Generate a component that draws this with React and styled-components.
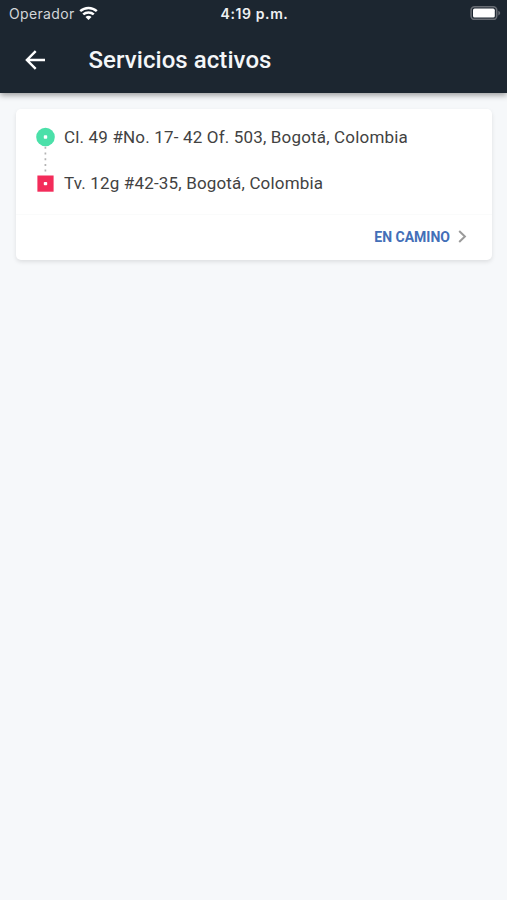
import React from 'react';
import styled, { createGlobalStyle } from 'styled-components';

const GlobalStyle = createGlobalStyle`
  * {
    box-sizing: border-box;
  }
  body {
    margin: 0;
    background: #f6f8fa;
    font-family: Inter, Roboto, "Liberation Sans", sans-serif;
  }
`;

const Screen = styled.div`
  min-height: 100vh;
  background: #f6f8fa;
`;

// Dark block shared by the status bar and the navigation bar
const Header = styled.header`
  height: 93px;
  background: #1c2630;
  color: #fff;
  box-shadow: 0 2px 6px rgba(0, 0, 0, 0.4);
`;

const StatusBar = styled.div`
  display: grid;
  grid-template-columns: 1fr auto 1fr;
  align-items: center;
  height: 27px;
  padding: 0 6px 0 9px;
`;

const Carrier = styled.div`
  display: flex;
  align-items: center;
  gap: 4px;
  font-size: 14px;
  letter-spacing: 0.35px;
  color: #d3d6d9;
`;

const Clock = styled.div`
  font-size: 14px;
  font-weight: 600;
  letter-spacing: 0.6px;
  margin-right: 1px;
  color: #eff1f3;
`;

const Battery = styled.div`
  display: flex;
  justify-self: end;
  margin-bottom: 1px;
`;

const NavBar = styled.div`
  display: flex;
  align-items: center;
  height: 66px;
  padding-left: 25px;
`;

const BackButton = styled.button`
  display: flex;
  width: 63.5px;
  padding: 0;
  border: 0;
  background: none;
  color: #fff;
  cursor: pointer;
`;

const Title = styled.h1`
  margin: 0;
  font-family: Roboto, sans-serif;
  font-size: 24px;
  font-weight: 500;
  line-height: 28px;
  letter-spacing: 0.06px;
  color: #f4f6f8;
`;

const Card = styled.section`
  margin: 16px 15px 0 16px;
  height: 151px;
  border-radius: 5px;
  background: #fff;
  box-shadow: 0 2px 4px rgba(0, 0, 0, 0.1);
`;

const Route = styled.div`
  display: flex;
  gap: 9px;
  height: 106px;
  padding: 17px 20px 0;
  border-bottom: 1px solid #fafbfb;
`;

const Stops = styled.div`
  display: flex;
  flex-direction: column;
  gap: 23px;
`;

const Address = styled.p`
  margin: 0;
  font-family: Roboto, sans-serif;
  font-size: 17px;
  line-height: 23px;
  letter-spacing: 0.17px;
  white-space: nowrap;
  color: #424242;
`;

const CardFooter = styled.div`
  display: flex;
  align-items: center;
  justify-content: flex-end;
  gap: 8px;
  height: 43px;
  padding-right: 25px;
`;

const StatusLabel = styled.span`
  font-family: Roboto, sans-serif;
  font-size: 14px;
  font-weight: 700;
  color: #436fb8;
`;

const WifiIcon = () => (
  <svg width="19" height="15" viewBox="0 0 19 15" fill="none" stroke="#fff" strokeWidth="2.5">
    <path d="M1.2 5.2C5.9.9 13.1.9 17.8 5.2" />
    <path d="M4.2 8.4C7.2 5.7 11.8 5.7 14.8 8.4" />
    <path d="M6.5 10.9C8.2 9.4 10.8 9.4 12.5 10.9L9.5 14Z" fill="#fff" stroke="none" />
  </svg>
);

const BatteryIcon = () => (
  <svg width="31" height="14" viewBox="0 0 31 14">
    <rect x="1.1" y="0.8" width="25.6" height="12.6" rx="3.4" fill="none" stroke="#686d74" strokeWidth="1.6" />
    <rect x="3" y="2.6" width="21.8" height="9" rx="1.6" fill="#fff" />
    <path d="M28.3 4.8C30.8 5.8 30.8 8.4 28.3 9.4Z" fill="#686d74" />
  </svg>
);

const BackIcon = () => (
  <svg width="21" height="20" viewBox="0 0 21 20" fill="none" stroke="#fff" strokeWidth="2.4">
    <path d="M10.7 1.2 1.9 10l8.8 8.8M2 10h18" />
  </svg>
);

const RouteIcon = () => (
  <svg width="19" height="67" viewBox="0 0 19 67">
    <path d="M9.4 20.8v27" stroke="#b4b4b4" strokeWidth="1.7" strokeDasharray="2 3.7" />
    <circle cx="9.5" cy="11" r="9.3" fill="#4be0a9" />
    <rect x="7.8" y="9.3" width="3.4" height="3.4" rx="0.8" fill="#fff" />
    <rect x="1.4" y="49.5" width="16.2" height="16.2" fill="#f32c5a" />
    <rect x="7.8" y="55.9" width="3.4" height="3.4" rx="0.8" fill="#fff" />
  </svg>
);

const ChevronIcon = () => (
  <svg width="9" height="13" viewBox="0 0 9 13" fill="none" stroke="#9b9b9b" strokeWidth="2">
    <path d="M1.2 1 6.9 6.5 1.2 12" />
  </svg>
);

const ServiceCard = ({ service }) => (
  <Card>
    <Route>
      <RouteIcon />
      <Stops>
        {service.stops.map(stop => (
          <Address key={stop}>{stop}</Address>
        ))}
      </Stops>
    </Route>
    <CardFooter>
      <StatusLabel>{service.status}</StatusLabel>
      <ChevronIcon />
    </CardFooter>
  </Card>
);

const services = [
  {
    id: 1,
    status: 'EN CAMINO',
    stops: [
      'Cl. 49 #No. 17- 42 Of. 503, Bogotá, Colombia',
      'Tv. 12g #42-35, Bogotá, Colombia',
    ],
  },
];

const App = () => (
  <Screen>
    <GlobalStyle />
    <Header>
      <StatusBar>
        <Carrier>
          Operador
          <WifiIcon />
        </Carrier>
        <Clock>4:19 p.m.</Clock>
        <Battery>
          <BatteryIcon />
        </Battery>
      </StatusBar>
      <NavBar>
        <BackButton aria-label="Volver">
          <BackIcon />
        </BackButton>
        <Title>Servicios activos</Title>
      </NavBar>
    </Header>
    {services.map(service => (
      <ServiceCard key={service.id} service={service} />
    ))}
  </Screen>
);

export default App;
